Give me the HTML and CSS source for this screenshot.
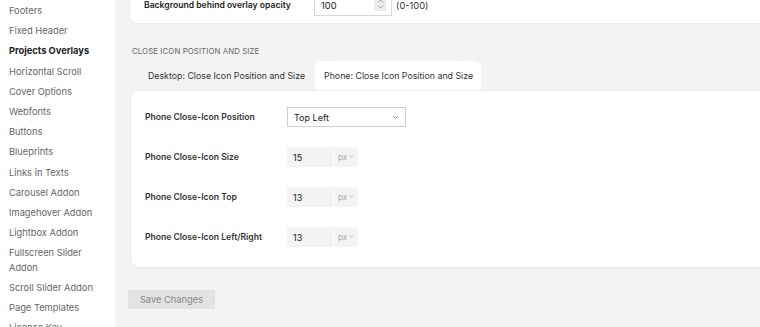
FILE: index.html
```html
<!DOCTYPE html>
<html>
<head>
<meta charset="utf-8">
<link rel="stylesheet" href="styles.css">
</head>
<body>
<div class="page">
  <nav class="sidebar">
    <a class="nav-item">Footers</a>
    <a class="nav-item">Fixed Header</a>
    <a class="nav-item active">Projects Overlays</a>
    <a class="nav-item">Horizontal Scroll</a>
    <a class="nav-item">Cover Options</a>
    <a class="nav-item">Webfonts</a>
    <a class="nav-item">Buttons</a>
    <a class="nav-item">Blueprints</a>
    <a class="nav-item">Links in Texts</a>
    <a class="nav-item">Carousel Addon</a>
    <a class="nav-item">Imagehover Addon</a>
    <a class="nav-item">Lightbox Addon</a>
    <a class="nav-item">Fullscreen Slider<br>Addon</a>
    <a class="nav-item">Scroll Slider Addon</a>
    <a class="nav-item">Page Templates</a>
    <a class="nav-item">License Key</a>
  </nav>
  <main class="main">
    <section class="card top-card">
      <div class="top-row">
        <span class="label">Background behind overlay opacity</span>
        <div class="num-input">
          <span class="num-value">100</span>
          <span class="spinner">
            <svg width="7" height="10" viewBox="0 0 7 10"><path d="M1 3.5 L3.5 1 L6 3.5 M1 6.5 L3.5 9 L6 6.5" fill="none" stroke="#999" stroke-width="0.9"/></svg>
          </span>
        </div>
        <span class="range">(0-100)</span>
      </div>
    </section>

    <h3 class="section-title">Close Icon Position and Size</h3>

    <div class="tabs">
      <div class="tab">Desktop: Close Icon Position and Size</div>
      <div class="tab tab-active">Phone: Close Icon Position and Size</div>
    </div>

    <section class="card panel">
      <div class="row">
        <span class="label">Phone Close-Icon Position</span>
        <div class="select">
          <span>Top Left</span>
          <svg width="7" height="5" viewBox="0 0 7 5"><path d="M1 1 L3.5 3.5 L6 1" fill="none" stroke="#888" stroke-width="0.9"/></svg>
        </div>
      </div>
      <div class="row">
        <span class="label">Phone Close-Icon Size</span>
        <div class="unit-field">
          <span class="unit-value">15</span>
          <span class="unit">px <svg width="5" height="4" viewBox="0 0 5 4"><path d="M0.7 0.8 L2.5 2.8 L4.3 0.8" fill="none" stroke="#aaa" stroke-width="0.8"/></svg></span>
        </div>
      </div>
      <div class="row">
        <span class="label">Phone Close-Icon Top</span>
        <div class="unit-field">
          <span class="unit-value">13</span>
          <span class="unit">px <svg width="5" height="4" viewBox="0 0 5 4"><path d="M0.7 0.8 L2.5 2.8 L4.3 0.8" fill="none" stroke="#aaa" stroke-width="0.8"/></svg></span>
        </div>
      </div>
      <div class="row">
        <span class="label">Phone Close-Icon Left/Right</span>
        <div class="unit-field">
          <span class="unit-value">13</span>
          <span class="unit">px <svg width="5" height="4" viewBox="0 0 5 4"><path d="M0.7 0.8 L2.5 2.8 L4.3 0.8" fill="none" stroke="#aaa" stroke-width="0.8"/></svg></span>
        </div>
      </div>
    </section>

    <div class="actions">
      <button class="save">Save Changes</button>
    </div>
  </main>
</div>
</body>
</html>
```

FILE: styles.css
```css
html, body {
  margin: 0;
  padding: 0;
  height: 100%;
  overflow: hidden;
}
body {
  font-family: Inter, "Noto Sans", sans-serif;
  background: #f3f3f3;
  color: #333;
}
.page {
  display: flex;
  height: 100%;
}
.sidebar {
  width: 115px;
  flex: none;
  background: #fff;
  display: flex;
  flex-direction: column;
  padding-top: 1px;
}
.nav-item {
  display: block;
  padding: 3px 0 3px 9px;
  font-size: 9.3px;
  line-height: 14.2px;
  color: #666;
}
.nav-item.active {
  font-weight: 700;
  color: #222;
}
.main {
  flex: 1;
  min-width: 0;
  padding-left: 14px;
  display: flex;
  flex-direction: column;
}
.card {
  background: #fff;
  border: 1px solid #ebebeb;
  border-right: none;
  border-radius: 8px 0 0 8px;
}
.top-card {
  margin-top: -20px;
  height: 44px;
  flex: none;
  box-sizing: border-box;
  padding: 13px 0 0 14px;
}
.top-row {
  display: flex;
  align-items: center;
  height: 22px;
}
.label {
  font-size: 8.6px;
  font-weight: 600;
  color: #333;
}
.top-row .label {
  width: 170px;
  color: #222;
}
.num-input {
  width: 78px;
  height: 22px;
  box-sizing: border-box;
  border: 1px solid #d8d8d8;
  display: flex;
  align-items: center;
  justify-content: space-between;
  padding: 0 5px 0 6px;
  font-size: 9.3px;
  color: #222;
}
.spinner {
  width: 12px;
  height: 14px;
  background: #ececec;
  display: flex;
  align-items: center;
  justify-content: center;
  margin-bottom: 3px;
}
.range {
  margin-left: 4px;
  font-size: 9.3px;
  color: #333;
}
.section-title {
  margin: 21px 0 0 3px;
  font-size: 7.8px;
  font-weight: 400;
  text-transform: uppercase;
  color: #666;
  letter-spacing: 0.1px;
  line-height: 12px;
}
.tabs {
  display: flex;
  flex: none;
  margin-top: 4px;
  padding-left: 6px;
  height: 29px;
}
.tab {
  font-size: 8.8px;
  color: #333;
  padding: 0 10px 0 13px;
  display: flex;
  align-items: center;
}
.tab-active {
  background: #fff;
  border-radius: 6px 6px 0 0;
  padding: 0 8px 0 9px;
}
.panel {
  height: 178px;
  flex: none;
  box-sizing: border-box;
  padding-top: 15px;
  padding-left: 14px;
  margin-left: 1px;
}
.row {
  display: flex;
  align-items: center;
  height: 22px;
  margin-bottom: 18px;
}
.row .label {
  width: 142px;
}
.select {
  width: 119px;
  height: 20px;
  box-sizing: border-box;
  border: 1px solid #cfcfcf;
  display: flex;
  align-items: center;
  justify-content: space-between;
  padding: 0 6px 0 6px;
  font-size: 9px;
  color: #222;
}
.unit-field {
  display: flex;
  height: 20px;
  gap: 1px;
}
.unit-value {
  width: 46px;
  background: #f3f3f3;
  border-radius: 3px 0 0 3px;
  box-sizing: border-box;
  padding-left: 6px;
  display: flex;
  align-items: center;
  font-size: 9px;
  color: #222;
}
.unit {
  width: 24px;
  background: #f3f3f3;
  border-radius: 0 3px 3px 0;
  display: flex;
  align-items: center;
  justify-content: center;
  gap: 2px;
  font-size: 8px;
  color: #aaa;
}
.actions {
  margin-top: 22px;
  flex: none;
}
.save {
  width: 87px;
  height: 19px;
  border: none;
  background: #e3e3e3;
  color: #888;
  font-family: Inter, "Noto Sans", sans-serif;
  font-size: 9.3px;
  padding: 0;
  margin-left: -1px;
  display: block;
}
```
